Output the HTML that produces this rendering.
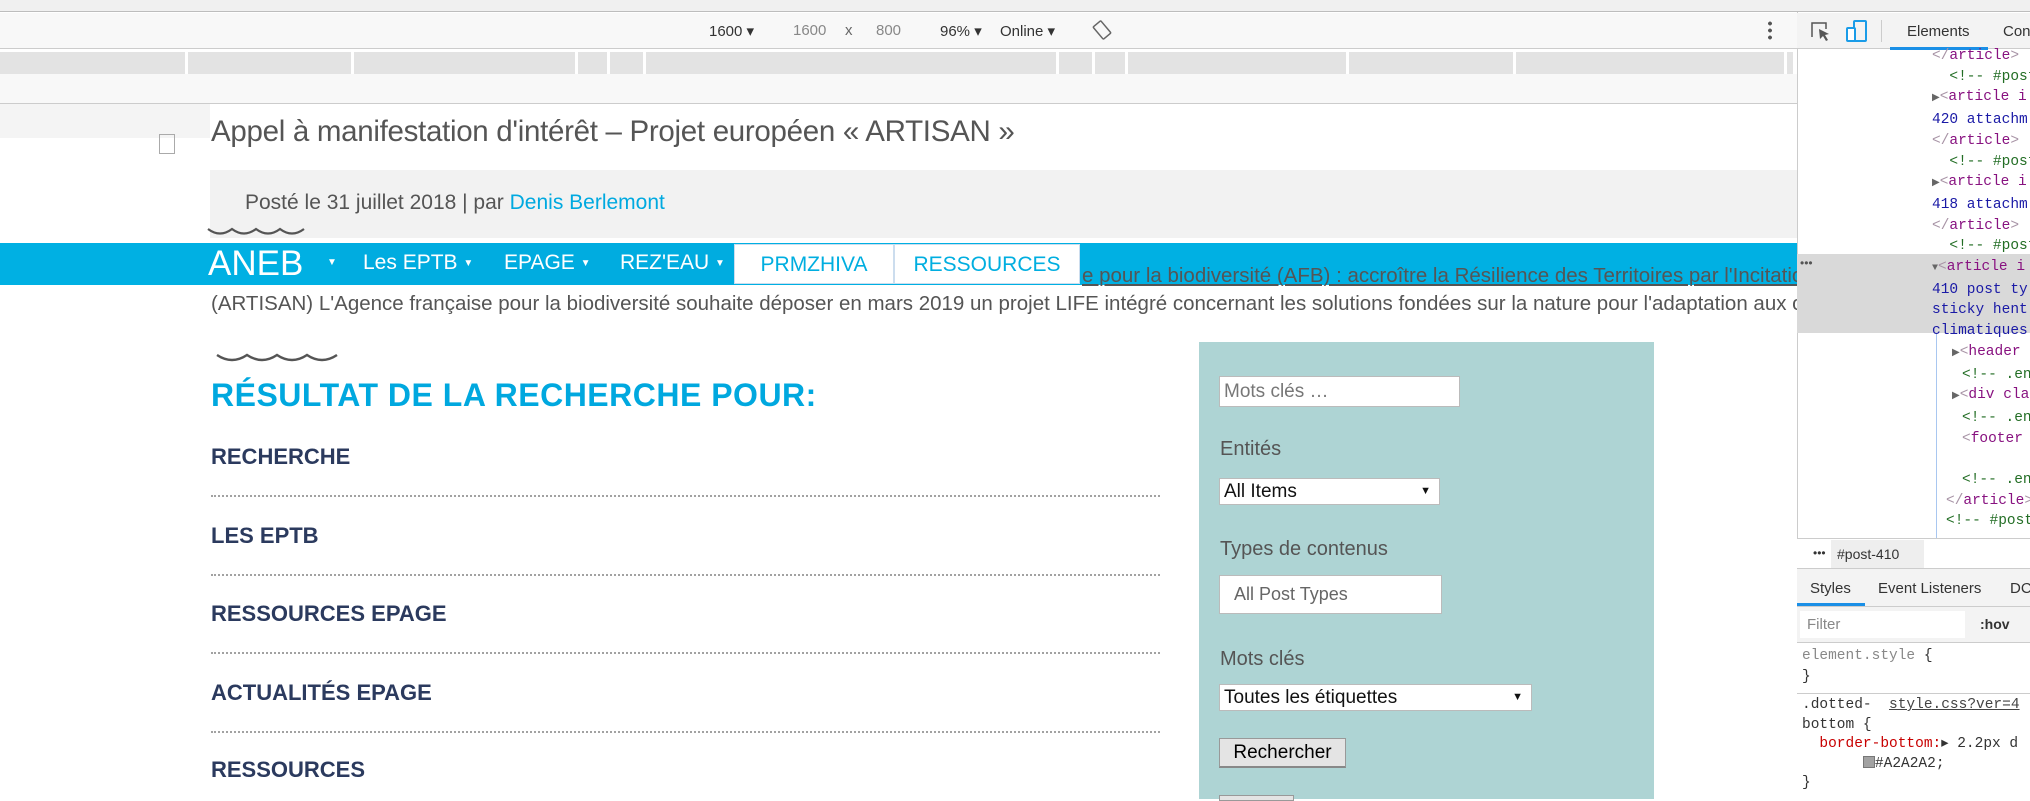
<!DOCTYPE html>
<html><head><meta charset="utf-8"><style>
*{margin:0;padding:0;box-sizing:border-box}
body{width:2030px;height:799px;overflow:hidden;position:relative;background:#fff;font-family:"Liberation Sans",sans-serif}
.a{position:absolute;white-space:nowrap}
.m{font-family:"Liberation Mono",monospace;font-size:14.5px}
.tg{color:#881280}.br{color:#a894a6}.at{color:#1a1aa6}.cm{color:#236e25}
.dot{position:absolute;left:211px;width:949px;border-bottom:2.2px dotted #a2a2a2}
.res{position:absolute;left:211px;color:#2b3a5e;font-weight:bold;font-size:22px}
.lab{position:absolute;left:1220px;color:#555;font-size:20px}
.fld{position:absolute;left:1219px;background:#fff;border:1px solid #bbb;font-size:19px;color:#111;padding-left:4px}
</style></head><body>
<div class="a" style="left:0;top:0;width:2030px;height:12px;background:#f0f0f0;border-bottom:1px solid #bdbdbd"></div>
<div class="a" style="left:0;top:13px;width:1797px;height:36px;background:#f8f8f8;border-bottom:1px solid #ccc"></div>
<div class="a" style="left:709px;top:22px;font-size:15px;color:#333">1600 ▾</div>
<div class="a" style="left:793px;top:22px;font-size:15px;color:#888">1600</div>
<div class="a" style="left:845px;top:22px;font-size:15px;color:#666">x</div>
<div class="a" style="left:876px;top:22px;font-size:15px;color:#888">800</div>
<div class="a" style="left:940px;top:22px;font-size:15px;color:#333">96% ▾</div>
<div class="a" style="left:1000px;top:22px;font-size:15px;color:#333">Online ▾</div>
<svg class="a" style="left:1092px;top:20px" width="20" height="20" viewBox="0 0 20 20"><rect x="5" y="2" width="10" height="16" rx="1" transform="rotate(-40 10 10)" fill="none" stroke="#666" stroke-width="1.5"/></svg>
<div class="a" style="left:1768px;top:20px;width:4px;height:20px;background:radial-gradient(circle,#555 1.8px,transparent 2px) 0 0/4px 7px"></div>
<div class="a" style="left:0;top:52px;width:1793px;height:22px;background:#e3e3e3"></div>
<div class="a" style="left:185px;top:52px;width:3px;height:22px;background:#fff"></div>
<div class="a" style="left:351px;top:52px;width:3px;height:22px;background:#fff"></div>
<div class="a" style="left:575px;top:52px;width:3px;height:22px;background:#fff"></div>
<div class="a" style="left:607px;top:52px;width:3px;height:22px;background:#fff"></div>
<div class="a" style="left:643px;top:52px;width:3px;height:22px;background:#fff"></div>
<div class="a" style="left:1056px;top:52px;width:3px;height:22px;background:#fff"></div>
<div class="a" style="left:1092px;top:52px;width:3px;height:22px;background:#fff"></div>
<div class="a" style="left:1125px;top:52px;width:3px;height:22px;background:#fff"></div>
<div class="a" style="left:1346px;top:52px;width:3px;height:22px;background:#fff"></div>
<div class="a" style="left:1513px;top:52px;width:3px;height:22px;background:#fff"></div>
<div class="a" style="left:1784px;top:52px;width:3px;height:22px;background:#fff"></div>
<div class="a" style="left:0;top:74px;width:1797px;height:30px;background:#f8f8f8;border-bottom:1px solid #ccc"></div>
<div class="a" style="left:0;top:104px;width:210px;height:34px;background:#f4f4f4"></div>
<div class="a" style="left:159px;top:134px;width:16px;height:20px;border:1px solid #aaa"></div>
<div class="a" style="left:211px;top:115px;font-size:29.5px;color:#555;letter-spacing:-0.3px">Appel à manifestation d'intérêt – Projet européen « ARTISAN »</div>
<div class="a" style="left:210px;top:170px;width:1587px;height:68px;background:#f2f2f2"></div>
<div class="a" style="left:245px;top:191px;font-size:21px;color:#555">Posté le 31 juillet 2018 | par <span style="color:#00a9e0">Denis Berlemont</span></div>
<svg class="a" style="left:207px;top:226px" width="100" height="12"><path d="M1 3 Q13 12 25 3 Q37 12 49 3 Q61 12 73 3 Q85 12 97 3" fill="none" stroke="#555" stroke-width="2.2"/></svg>
<div class="a" style="left:211px;top:292px;width:1586px;overflow:hidden;font-size:20.5px;color:#555">(ARTISAN) L'Agence française pour la biodiversité souhaite déposer en mars 2019 un projet LIFE intégré concernant les solutions fondées sur la nature pour l'adaptation aux changements</div>
<div class="a" style="left:0;top:243px;width:1797px;height:42px;background:#00b0e3"></div>
<div class="a" style="left:340px;top:243px;width:394px;height:42px;background:#00ace0"></div>
<div class="a" style="left:208px;top:244px;font-size:35px;color:#fff">ANEB</div>
<div class="a" style="left:327px;top:257px;font-size:10px;color:#fff">▼</div>
<div class="a" style="left:363px;top:251px;font-size:21px;color:#fff">Les EPTB <span style="font-size:10px;vertical-align:3px">▼</span></div>
<div class="a" style="left:504px;top:251px;font-size:21px;color:#fff">EPAGE <span style="font-size:10px;vertical-align:3px">▼</span></div>
<div class="a" style="left:620px;top:251px;font-size:21px;color:#fff">REZ'EAU <span style="font-size:10px;vertical-align:3px">▼</span></div>
<div class="a" style="left:734px;top:244px;width:160px;height:40px;background:#fff;border:1px solid #cde;color:#00aee0;font-size:21px;text-align:center;line-height:40px">PRMZHIVA</div>
<div class="a" style="left:894px;top:244px;width:186px;height:40px;background:#fff;border:1px solid #cde;color:#00aee0;font-size:21px;text-align:center;line-height:40px">RESSOURCES</div>
<div class="a" style="left:1082px;top:264px;width:715px;overflow:hidden;font-size:20.5px;color:#555;text-decoration:underline">e pour la biodiversité (AFB) : accroître la Résilience des Territoires par l'Incitation</div>
<svg class="a" style="left:216px;top:352px" width="130" height="14"><path d="M1 3 Q16 13 31 3 Q46 13 61 3 Q76 13 91 3 Q106 13 121 3" fill="none" stroke="#555" stroke-width="2.4"/></svg>
<div class="a" style="left:211px;top:377px;font-size:32px;color:#00a8df;font-weight:bold;letter-spacing:.5px">RÉSULTAT DE LA RECHERCHE POUR:</div>
<div class="res" style="top:444px">RECHERCHE</div>
<div class="dot" style="top:495px"></div>
<div class="res" style="top:523px">LES EPTB</div>
<div class="dot" style="top:574px"></div>
<div class="res" style="top:601px">RESSOURCES EPAGE</div>
<div class="dot" style="top:652px"></div>
<div class="res" style="top:680px">ACTUALITÉS EPAGE</div>
<div class="dot" style="top:731px"></div>
<div class="res" style="top:757px">RESSOURCES</div>
<div class="a" style="left:1199px;top:342px;width:455px;height:457px;background:#aed4d4"></div>
<div class="fld" style="top:376px;width:241px;height:31px;color:#777;line-height:29px">Mots clés …</div>
<div class="lab" style="top:438px">Entités</div>
<div class="fld" style="top:478px;width:221px;height:27px;line-height:25px">All Items<span style="position:absolute;right:8px;font-size:11px">▼</span></div>
<div class="lab" style="top:538px">Types de contenus</div>
<div class="fld" style="top:575px;width:223px;height:39px;line-height:37px;color:#666;padding-left:14px;font-size:18px">All Post Types</div>
<div class="lab" style="top:648px">Mots clés</div>
<div class="fld" style="top:684px;width:313px;height:27px;line-height:25px">Toutes les étiquettes<span style="position:absolute;right:8px;font-size:11px">▼</span></div>
<div class="a" style="left:1219px;top:738px;width:127px;height:30px;background:#e4e4e4;border:1px solid #999;border-bottom:2px solid #888;font-size:19px;line-height:27px;text-align:center">Rechercher</div>
<div class="a" style="left:1219px;top:795px;width:75px;height:6px;background:#e4e4e4;border:1px solid #999"></div>
<div class="a" style="left:1797px;top:12px;width:233px;height:787px;background:#fff;border-left:1px solid #ccc"></div>
<div class="a" style="left:1797px;top:13px;width:233px;height:36px;background:#f3f3f3;border-bottom:1px solid #ccc"></div>
<svg class="a" style="left:1810px;top:21px" width="22" height="22"><path d="M2 16V2h14v6" fill="none" stroke="#555" stroke-width="1.5"/><path d="M9 8l10 5-4 1 3 5-2 1-3-5-3 3z" fill="#555"/></svg>
<svg class="a" style="left:1846px;top:20px" width="22" height="22"><rect x="8" y="1" width="12" height="20" rx="1" fill="none" stroke="#1a9ce8" stroke-width="2"/><rect x="1" y="8" width="8" height="13" rx="1" fill="#fff" stroke="#1a9ce8" stroke-width="2"/></svg>
<div class="a" style="left:1881px;top:20px;width:1px;height:22px;background:#ccc"></div>
<div class="a" style="left:1907px;top:23px;font-size:15px;color:#333">Elements</div>
<div class="a" style="left:2003px;top:23px;font-size:15px;color:#333">Con</div>
<div class="a" style="left:1890px;top:47px;width:98px;height:3px;background:#1a8fe6"></div>
<div class="a" style="left:1797px;top:254px;width:233px;height:79px;background:#d9d9d9"></div>
<div class="a" style="left:1800px;top:256px;font-size:12px;color:#555">•••</div>
<div class="a" style="left:1936px;top:333px;width:1px;height:205px;background:#a9c7f0"></div>
<div class="a m" style="left:1932px;top:46px;line-height:20.7px">
<div class="br">&lt;/<span class="tg">article</span>&gt;</div>
<div class="cm">&nbsp;&nbsp;&lt;!-- #post</div>
<div><span style="color:#666;font-size:10px">▶</span><span class="br">&lt;</span><span class="tg">article i</span></div>
<div class="at">420 attachm</div>
<div class="br">&lt;/<span class="tg">article</span>&gt;</div>
<div class="cm">&nbsp;&nbsp;&lt;!-- #post</div>
<div><span style="color:#666;font-size:10px">▶</span><span class="br">&lt;</span><span class="tg">article i</span></div>
<div class="at">418 attachm</div>
<div class="br">&lt;/<span class="tg">article</span>&gt;</div>
<div class="cm">&nbsp;&nbsp;&lt;!-- #post</div>
<div><span style="color:#666;font-size:10px">▼</span><span class="br">&lt;</span><span class="tg">article i</span></div>
<div class="at">410 post ty</div>
<div class="at">sticky hent</div>
<div class="at">climatiques</div>
<div style="padding-left:20px"><span style="color:#666;font-size:10px">▶</span><span class="br">&lt;</span><span class="tg">header</span></div>
<div class="cm" style="padding-left:30px">&lt;!-- .en</div>
<div style="padding-left:20px"><span style="color:#666;font-size:10px">▶</span><span class="br">&lt;</span><span class="tg">div cla</span></div>
<div class="cm" style="padding-left:30px">&lt;!-- .en</div>
<div style="padding-left:30px" class="br">&lt;<span class="tg">footer</span></div>
<div>&nbsp;</div>
<div class="cm" style="padding-left:30px">&lt;!-- .en</div>
<div class="br" style="padding-left:14px">&lt;/<span class="tg">article</span>&gt;</div>
<div class="cm" style="padding-left:14px">&lt;!-- #post</div>
</div>
<div class="a" style="left:1797px;top:538px;width:233px;height:261px;background:#fff;border-top:1px solid #ccc"></div>
<div class="a" style="left:1813px;top:546px;font-size:12px;color:#333">•••</div>
<div class="a" style="left:1831px;top:540px;width:93px;height:28px;background:#eee;font-size:14px;line-height:28px;padding-left:6px;color:#333">#post-410</div>
<div class="a" style="left:1797px;top:568px;width:233px;height:39px;background:#f3f3f3;border-top:1px solid #ccc;border-bottom:1px solid #ccc"></div>
<div class="a" style="left:1810px;top:580px;font-size:15px;color:#333">Styles</div>
<div class="a" style="left:1878px;top:580px;font-size:15px;color:#333">Event Listeners</div>
<div class="a" style="left:2010px;top:580px;font-size:15px;color:#333">DC</div>
<div class="a" style="left:1797px;top:603px;width:68px;height:3px;background:#1a8fe6"></div>
<div class="a" style="left:1797px;top:607px;width:233px;height:36px;background:#f3f3f3;border-bottom:1px solid #ccc"></div>
<div class="a" style="left:1800px;top:611px;width:165px;height:27px;background:#fff"></div>
<div class="a" style="left:1807px;top:616px;font-size:15px;color:#888">Filter</div>
<div class="a" style="left:1980px;top:616px;font-size:14px;color:#333;font-weight:bold">:hov</div>
<div class="a m" style="left:1802px;top:646px;line-height:21px;color:#888">element.style <span style="color:#333">{</span><br><span style="color:#333">}</span></div>
<div class="a" style="left:1797px;top:693px;width:233px;height:1px;background:#ccc"></div>
<div class="a m" style="left:1802px;top:696px;line-height:19.5px;color:#333">.dotted- &nbsp;<span style="text-decoration:underline;color:#444">style.css?ver=4</span><br>bottom {<br>&nbsp;&nbsp;<span style="color:#c80000">border-bottom:</span>▸ 2.2px d<br>&nbsp;&nbsp;&nbsp;&nbsp;&nbsp;&nbsp;&nbsp;<span style="display:inline-block;width:12px;height:12px;background:#a2a2a2;border:1px solid #777;vertical-align:-1px"></span>#A2A2A2;<br>}</div>
</body></html>
